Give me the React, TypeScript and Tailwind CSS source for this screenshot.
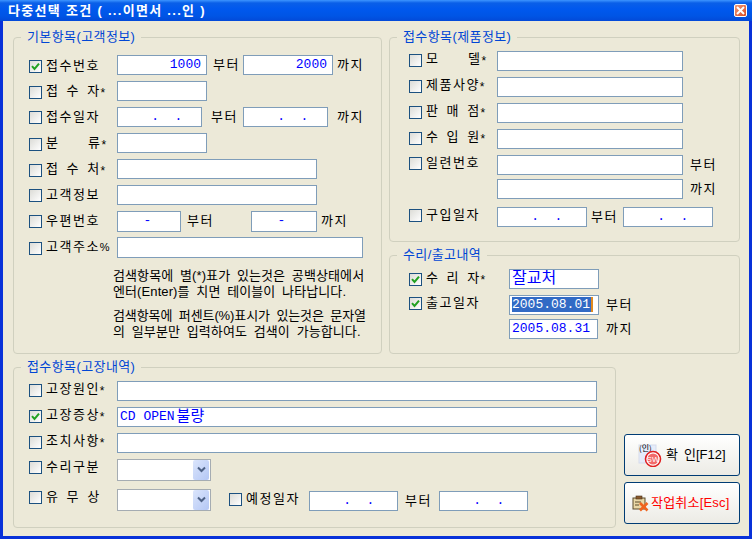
import type { ReactNode } from 'react';

const mono = "font-['Liberation_Mono','Noto_Sans_CJK_KR',monospace]";

function Group({ title, className, children }: { title: string; className: string; children: ReactNode }) {
  return (
    <div className={`relative rounded-[4px] border border-[#d0d0bf] ${className}`}>
      <div className="absolute left-[7px] -top-[10px] bg-[#ece9d8] px-[6px] text-[13px] leading-[18px] tracking-[0.4px] text-[#0046d5]">
        {title}
      </div>
      {children}
    </div>
  );
}

function Check({ label, checked, className }: { label: string; checked?: boolean; className: string }) {
  const mark = label.endsWith('*') ? '*' : label.endsWith('%') ? '%' : '';
  const text = mark ? label.slice(0, -1) : label;
  return (
    <div className={`flex items-center gap-[4px] self-start ${className}`}>
      <div className="flex h-[13px] w-[13px] shrink-0 items-center justify-center border border-[#1c5180] bg-gradient-to-br from-[#dcdcd7] to-white">
        {checked && (
          <svg width="11" height="11" viewBox="0 0 11 11">
            <path d="M2 5.2 L4.5 8 L9 2.6" fill="none" stroke="#21a121" strokeWidth="2" />
          </svg>
        )}
      </div>
      <span className="relative -top-[1px] whitespace-pre text-[13px] leading-[15px] tracking-[1.5px] text-black [word-spacing:2px]">
        {text}
        {mark === '*' && <span className="relative top-[2px] text-[12px]">*</span>}
        {mark === '%' && <span className="text-[11px]">%</span>}
      </span>
    </div>
  );
}

function Field({ className, value, right, selected }: { className: string; value?: ReactNode; right?: boolean; selected?: boolean }) {
  return (
    <div
      className={`h-[20px] shrink-0 overflow-hidden whitespace-pre border border-[#7f9db9] bg-white pl-[2px] pr-[5px] text-[13px] leading-[18px] text-[#0000ff] ${mono} ${right ? 'text-right' : ''} ${className}`}
    >
      {selected ? (
        <span className="inline-block h-[15px] border-r-2 border-[#e08a1e] bg-[#316ac5] pr-[1px] leading-[15px] text-white">{value}</span>
      ) : (
        value
      )}
    </div>
  );
}

function Combo() {
  return (
    <div className="flex h-[22px] w-[94px] shrink-0 items-center justify-end border border-[#a5acb2] bg-white pr-[1px]">
      <div className="flex h-[20px] w-[16px] items-center justify-center rounded-[2px] bg-gradient-to-br from-[#dbe5fb] to-[#b4c7f5]">
        <svg width="9" height="8" viewBox="0 0 9 8">
          <path d="M1 1.5 L4.5 5 L8 1.5" fill="none" stroke="#4d6185" strokeWidth="2" />
        </svg>
      </div>
    </div>
  );
}

function Word({ children, className = '' }: { children: ReactNode; className?: string }) {
  return <span className={`shrink-0 whitespace-pre text-[13px] leading-[18px] tracking-[1.5px] text-black ${className}`}>{children}</span>;
}

const dateValue = '    .  .';

export default function App() {
  return (
    <div className="flex h-[539px] w-[752px] flex-col overflow-hidden bg-[#0831d9] font-['Liberation_Sans','Noto_Sans_CJK_KR',sans-serif]">
      {/* Title bar */}
      <div className="flex h-[21px] shrink-0 items-center justify-between bg-[linear-gradient(180deg,#3d95ff_0px,#0a5fe8_3px,#0058ee_9px,#0055e5_16px,#0349d8_21px)] pl-[8px] pr-[5px]">
        <span className="whitespace-pre text-[13px] font-bold leading-[16px] tracking-[1.3px] text-white">다중선택 조건 ( ...이면서 ...인 )</span>
        <div className="flex h-[13px] w-[13px] items-center justify-center rounded-[2px] border border-white bg-gradient-to-br from-[#ef9a78] to-[#d8461c]">
          <svg width="9" height="9" viewBox="0 0 9 9">
            <path d="M1 1 L8 8 M8 1 L1 8" stroke="white" strokeWidth="2" />
          </svg>
        </div>
      </div>

      {/* Window body */}
      <div className="mx-[3px] mb-[3px] flex flex-1 flex-col bg-[#ece9d8] pl-[10px] pt-[16px]">
        <div className="flex gap-[7px]">
          {/* 기본항목 */}
          <Group title="기본항목(고객정보)" className="h-[317px] w-[369px] pl-[15px] pt-[17px]">
            <div className="flex flex-col gap-[6px]">
              <div className="flex h-[20px] items-center">
                <Check label="접수번호" checked className="w-[88px] pt-[4px]" />
                <Field className="w-[90px]" value="1000" right />
                <Word className="ml-[6px] w-[30px]">부터</Word>
                <Field className="w-[90px]" value="2000" right />
                <Word className="ml-[4px]">까지</Word>
              </div>
              <div className="flex h-[20px] items-center">
                <Check label="접 수 자*" className="w-[88px] pt-[3px]" />
                <Field className="w-[90px]" />
              </div>
              <div className="flex h-[20px] items-center">
                <Check label="접수일자" className="w-[88px] pt-[3px]" />
                <Field className="w-[85px]" value={dateValue} />
                <Word className="ml-[9px] w-[32px]">부터</Word>
                <Field className="w-[85px]" value={dateValue} />
                <Word className="ml-[9px]">까지</Word>
              </div>
              <div className="flex h-[20px] items-center">
                <Check label="분    류*" className="w-[88px] pt-[3px]" />
                <Field className="w-[90px]" />
              </div>
              <div className="flex h-[20px] items-center">
                <Check label="접 수 처*" className="w-[88px] pt-[3px]" />
                <Field className="w-[200px]" />
              </div>
              <div className="flex h-[20px] items-center">
                <Check label="고객정보" className="w-[88px] pt-[3px]" />
                <Field className="w-[200px]" />
              </div>
              <div className="flex h-[20px] items-center">
                <Check label="우편번호" className="w-[88px] pt-[3px]" />
                <Field className="!h-[21px] w-[64px]" value="   -" />
                <Word className="ml-[6px] w-[64px]">부터</Word>
                <Field className="!h-[21px] w-[66px]" value="   -" />
                <Word className="ml-[4px]">까지</Word>
              </div>
              <div className="flex h-[20px] items-center">
                <Check label="고객주소%" className="w-[88px] pt-[3px]" />
                <Field className="!h-[21px] w-[246px]" />
              </div>
            </div>
            <div className="ml-[84px] mt-[11px] flex flex-col whitespace-nowrap text-[13px] leading-[16px] tracking-[0.1px] text-black [word-spacing:3px]">
              <span>검색항목에 별(*)표가 있는것은 공백상태에서</span>
              <span>엔터(Enter)를 치면 테이블이 나타납니다.</span>
              <span className="mt-[8px] tracking-[-0.1px]">검색항목에 퍼센트(%)표시가 있는것은 문자열</span>
              <span>의 일부분만 입력하여도 검색이 가능합니다.</span>
            </div>
          </Group>

          <div className="flex flex-col gap-[13px]">
            {/* 제품정보 */}
            <Group title="접수항목(제품정보)" className="h-[205px] w-[351px] pl-[19px] pt-[13px]">
              <div className="flex flex-col gap-[6px]">
                <div className="flex h-[20px]">
                  <Check label="모    델*" className="w-[88px] pt-[1px]" />
                  <Field className="w-[186px]" />
                </div>
                <div className="flex h-[20px]">
                  <Check label="제품사양*" className="w-[88px] pt-[1px]" />
                  <Field className="w-[186px]" />
                </div>
                <div className="flex h-[20px]">
                  <Check label="판 매 점*" className="w-[88px] pt-[1px]" />
                  <Field className="w-[186px]" />
                </div>
                <div className="flex h-[20px]">
                  <Check label="수 입 원*" className="w-[88px] pt-[1px]" />
                  <Field className="w-[186px]" />
                </div>
                <div className="flex h-[20px] items-center">
                  <Check label="일련번호" className="w-[88px] pt-[1px]" />
                  <Field className="w-[186px]" />
                  <Word className="ml-[7px]">부터</Word>
                </div>
                <div className="-mt-[2px] flex h-[20px] items-center pl-[88px]">
                  <Field className="w-[186px]" />
                  <Word className="ml-[7px]">까지</Word>
                </div>
                <div className="mt-[2px] flex h-[20px] items-center">
                  <Check label="구입일자" className="w-[88px] pt-[1px]" />
                  <Field className="w-[90px]" value={dateValue} />
                  <Word className="ml-[4px] w-[32px]">부터</Word>
                  <Field className="w-[90px]" value={dateValue} />
                </div>
              </div>
            </Group>

            {/* 수리/출고내역 */}
            <Group title="수리/출고내역" className="h-[99px] w-[351px] pl-[19px] pt-[13px]">
              <div className="flex flex-col gap-[6px]">
                <div className="flex h-[20px]">
                  <Check label="수 리 자*" checked className="w-[100px] pt-[2px]" />
                  <Field className="w-[90px] !text-[16px]" value="잘교처" />
                </div>
                <div className="flex h-[20px] items-center">
                  <Check label="출고일자" checked className="w-[100px] pt-[1px]" />
                  <Field className="w-[90px]" value="2005.08.01" selected />
                  <Word className="ml-[7px]">부터</Word>
                </div>
                <div className="-mt-[2px] flex h-[20px] items-center pl-[100px]">
                  <Field className="w-[89px]" value="2005.08.31" />
                  <Word className="ml-[8px]">까지</Word>
                </div>
              </div>
            </Group>
          </div>
        </div>

        <div className="mt-[13px] flex gap-[8px]">
          {/* 고장내역 */}
          <Group title="접수항목(고장내역)" className="h-[161px] w-[603px] pl-[15px] pt-[13px]">
            <div className="flex flex-col gap-[6px]">
              <div className="flex h-[20px]">
                <Check label="고장원인*" className="w-[88px] pt-[1px]" />
                <Field className="w-[480px]" />
              </div>
              <div className="flex h-[20px]">
                <Check label="고장증상*" checked className="w-[88px] pt-[1px]" />
                <Field
                  className="w-[480px]"
                  value={
                    <>
                      CD OPEN<span className="relative top-[1px] ml-[2px] text-[15px] leading-[15px]">불량</span>
                    </>
                  }
                />
              </div>
              <div className="flex h-[20px]">
                <Check label="조치사항*" className="w-[88px] pt-[1px]" />
                <Field className="w-[480px]" />
              </div>
              <div className="flex h-[22px]">
                <Check label="수리구분" className="w-[88px] pt-[1px]" />
                <Combo />
              </div>
              <div className="mt-[2px] flex h-[22px]">
                <Check label="유 무 상" className="w-[88px] pt-[1px]" />
                <Combo />
                <Check label="예정일자" className="ml-[18px] w-[80px] pt-[3px]" />
                <div className="flex items-center pt-[2px]">
                  <Field className="w-[89px]" value={dateValue} />
                  <Word className="ml-[7px] w-[34px]">부터</Word>
                  <Field className="w-[89px]" value={dateValue} />
                </div>
              </div>
            </div>
          </Group>

          {/* Buttons */}
          <div className="flex flex-col justify-end gap-[6px] pb-[4px]">
            <button className="flex h-[42px] w-[116px] items-center rounded-[3px] border border-[#003c74] bg-gradient-to-b from-white to-[#ecebe5] pl-[13px]">
              <svg width="26" height="24" viewBox="0 0 26 24" className="shrink-0">
                <rect x="1" y="2" width="17" height="18" fill="#e6ecfa" stroke="#d5dcec" />
                <text x="1" y="8" fontSize="8" fill="#000" fontFamily="Noto Sans CJK KR">(인)</text>
                <circle cx="15" cy="16" r="7.5" fill="#fff" stroke="#e02020" strokeWidth="1.6" />
                <circle cx="15" cy="16" r="5.6" fill="#f26a6a" />
                <text x="15" y="19" fontSize="8" fill="#fff" textAnchor="middle" fontFamily="Liberation Sans">SW</text>
              </svg>
              <span className="ml-[2px] whitespace-pre text-[13px] leading-[16px] text-black [word-spacing:2.4px]">확 인[F12]</span>
            </button>
            <button className="flex h-[42px] w-[116px] items-center rounded-[3px] border border-[#003c74] bg-gradient-to-b from-white to-[#ecebe5] pl-[7px]">
              <svg width="17" height="17" viewBox="0 0 17 17" className="shrink-0">
                <rect x="1" y="3" width="12" height="11" fill="#e9d8a6" stroke="#5a4a2a" />
                <rect x="4" y="1" width="6" height="3" fill="#8a5a2b" stroke="#4a3018" strokeWidth="0.6" />
                <path d="M3 7 H9 M3 10 H7" stroke="#5a4a2a" />
                <path d="M8 8 L15.5 15.5 M15.5 8 L8 15.5" stroke="#f0641e" strokeWidth="2.6" />
              </svg>
              <span className="ml-[2px] whitespace-pre text-[13px] leading-[16px] tracking-[0.2px] text-[#ff0000]">작업취소[Esc]</span>
            </button>
          </div>
        </div>
      </div>
    </div>
  );
}
